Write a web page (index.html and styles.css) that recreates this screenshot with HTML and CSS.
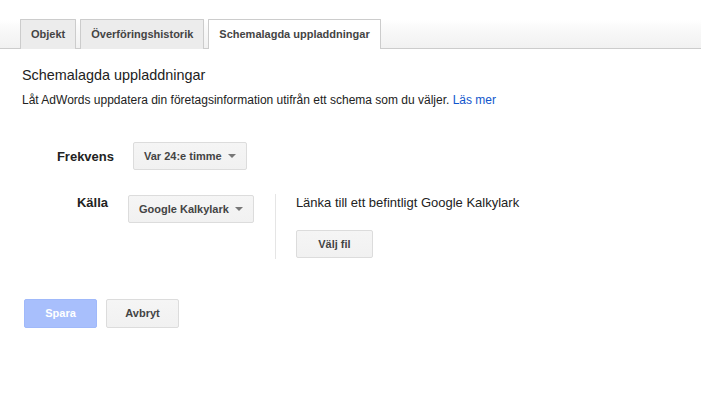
FILE: index.html
```html
<!DOCTYPE html>
<html>
<head>
    <title>Schemalagda uppladdningar</title>
    <link rel="stylesheet" href="styles.css">
</head>
<body>
    <div class="tabbar">
        <div class="tab">Objekt</div>
        <div class="tab">Överföringshistorik</div>
        <div class="tab active">Schemalagda uppladdningar</div>
    </div>
    <div class="content">
        <h1>Schemalagda uppladdningar</h1>
        <p class="desc">Låt AdWords uppdatera din företagsinformation utifrån ett schema som du väljer. <a href="#">Läs mer</a></p>

        <div class="row row-freq">
            <div class="label label-freq">Frekvens</div>
            <div class="btn dropdown">Var 24:e timme <span class="caret"></span></div>
        </div>

        <div class="row row-source">
            <div class="label label-source">Källa</div>
            <div class="btn dropdown">Google Kalkylark <span class="caret"></span></div>
            <div class="panel">
                <p>Länka till ett befintligt Google Kalkylark</p>
                <div class="btn btn-file">Välj fil</div>
            </div>
        </div>

        <div class="actions">
            <div class="btn btn-save">Spara</div>
            <div class="btn btn-cancel">Avbryt</div>
        </div>
    </div>
</body>
</html>
```

FILE: styles.css
```css
body {
    margin: 0;
    font-family: Arial, "Liberation Sans", sans-serif;
    color: #222;
    background: #fff;
}
.tabbar {
    display: flex;
    gap: 4px;
    margin-top: 19px;
    padding-left: 20px;
    height: 29px;
    border-bottom: 1px solid #ccc;
    background: linear-gradient(#fff 1px, #fafafa 8px, #f1f1f1);
}
.tab {
    box-sizing: border-box;
    height: 30px;
    padding: 0 10px;
    line-height: 28px;
    font-size: 11px;
    font-weight: bold;
    color: #444;
    background: #ececec;
    border: 1px solid #ccc;
    border-bottom: none;
    border-radius: 1px 1px 0 0;
}
.tab.active {
    background: #fff;
}
.content {
    padding-left: 22px;
}
h1 {
    margin: 16px 0 0;
    font-size: 14.4px;
    font-weight: normal;
    line-height: 20px;
    color: #222;
}
.desc {
    margin: 6px 0 0;
    font-size: 12px;
    line-height: 18px;
}
.desc a {
    color: #15c;
    text-decoration: none;
}
.row {
    display: flex;
    align-items: flex-start;
}
.row-freq {
    margin-top: 33px;
    align-items: center;
}
.row-source {
    margin-top: 24px;
}
.label {
    font-size: 13px;
    font-weight: bold;
    text-align: right;
    box-sizing: border-box;
}
.label-freq {
    width: 111px;
    padding-right: 19px;
}
.label-source {
    width: 106px;
    padding-right: 20px;
    margin-top: 1px;
    line-height: 16px;
}
.btn {
    box-sizing: border-box;
    height: 28px;
    line-height: 26px;
    padding: 0 10px;
    font-size: 11px;
    font-weight: bold;
    color: #444;
    text-align: center;
    background: linear-gradient(#f5f5f5, #f1f1f1);
    border: 1px solid #dcdcdc;
    border-radius: 2px;
}
.dropdown {
    display: flex;
    align-items: center;
    gap: 6px;
}
.row-source .dropdown {
    margin-top: 1px;
}
.caret {
    width: 0;
    height: 0;
    border-left: 4px solid transparent;
    border-right: 4px solid transparent;
    border-top: 4px solid #777;
}
.panel {
    margin-left: 21px;
    padding: 0 0 0 20px;
    height: 65px;
    border-left: 1px solid #e5e5e5;
}
.panel p {
    margin: 0;
    font-size: 13px;
    line-height: 18px;
}
.btn-file {
    width: 77px;
    margin-top: 18px;
}
.actions {
    display: flex;
    gap: 9px;
    margin-top: 40px;
    margin-left: 2px;
}
.actions .btn {
    width: 73px;
    height: 29px;
    line-height: 27px;
}
.btn-save {
    color: #fff;
    background: #a8bffc;
    border-color: #a0b9fa;
}
```
